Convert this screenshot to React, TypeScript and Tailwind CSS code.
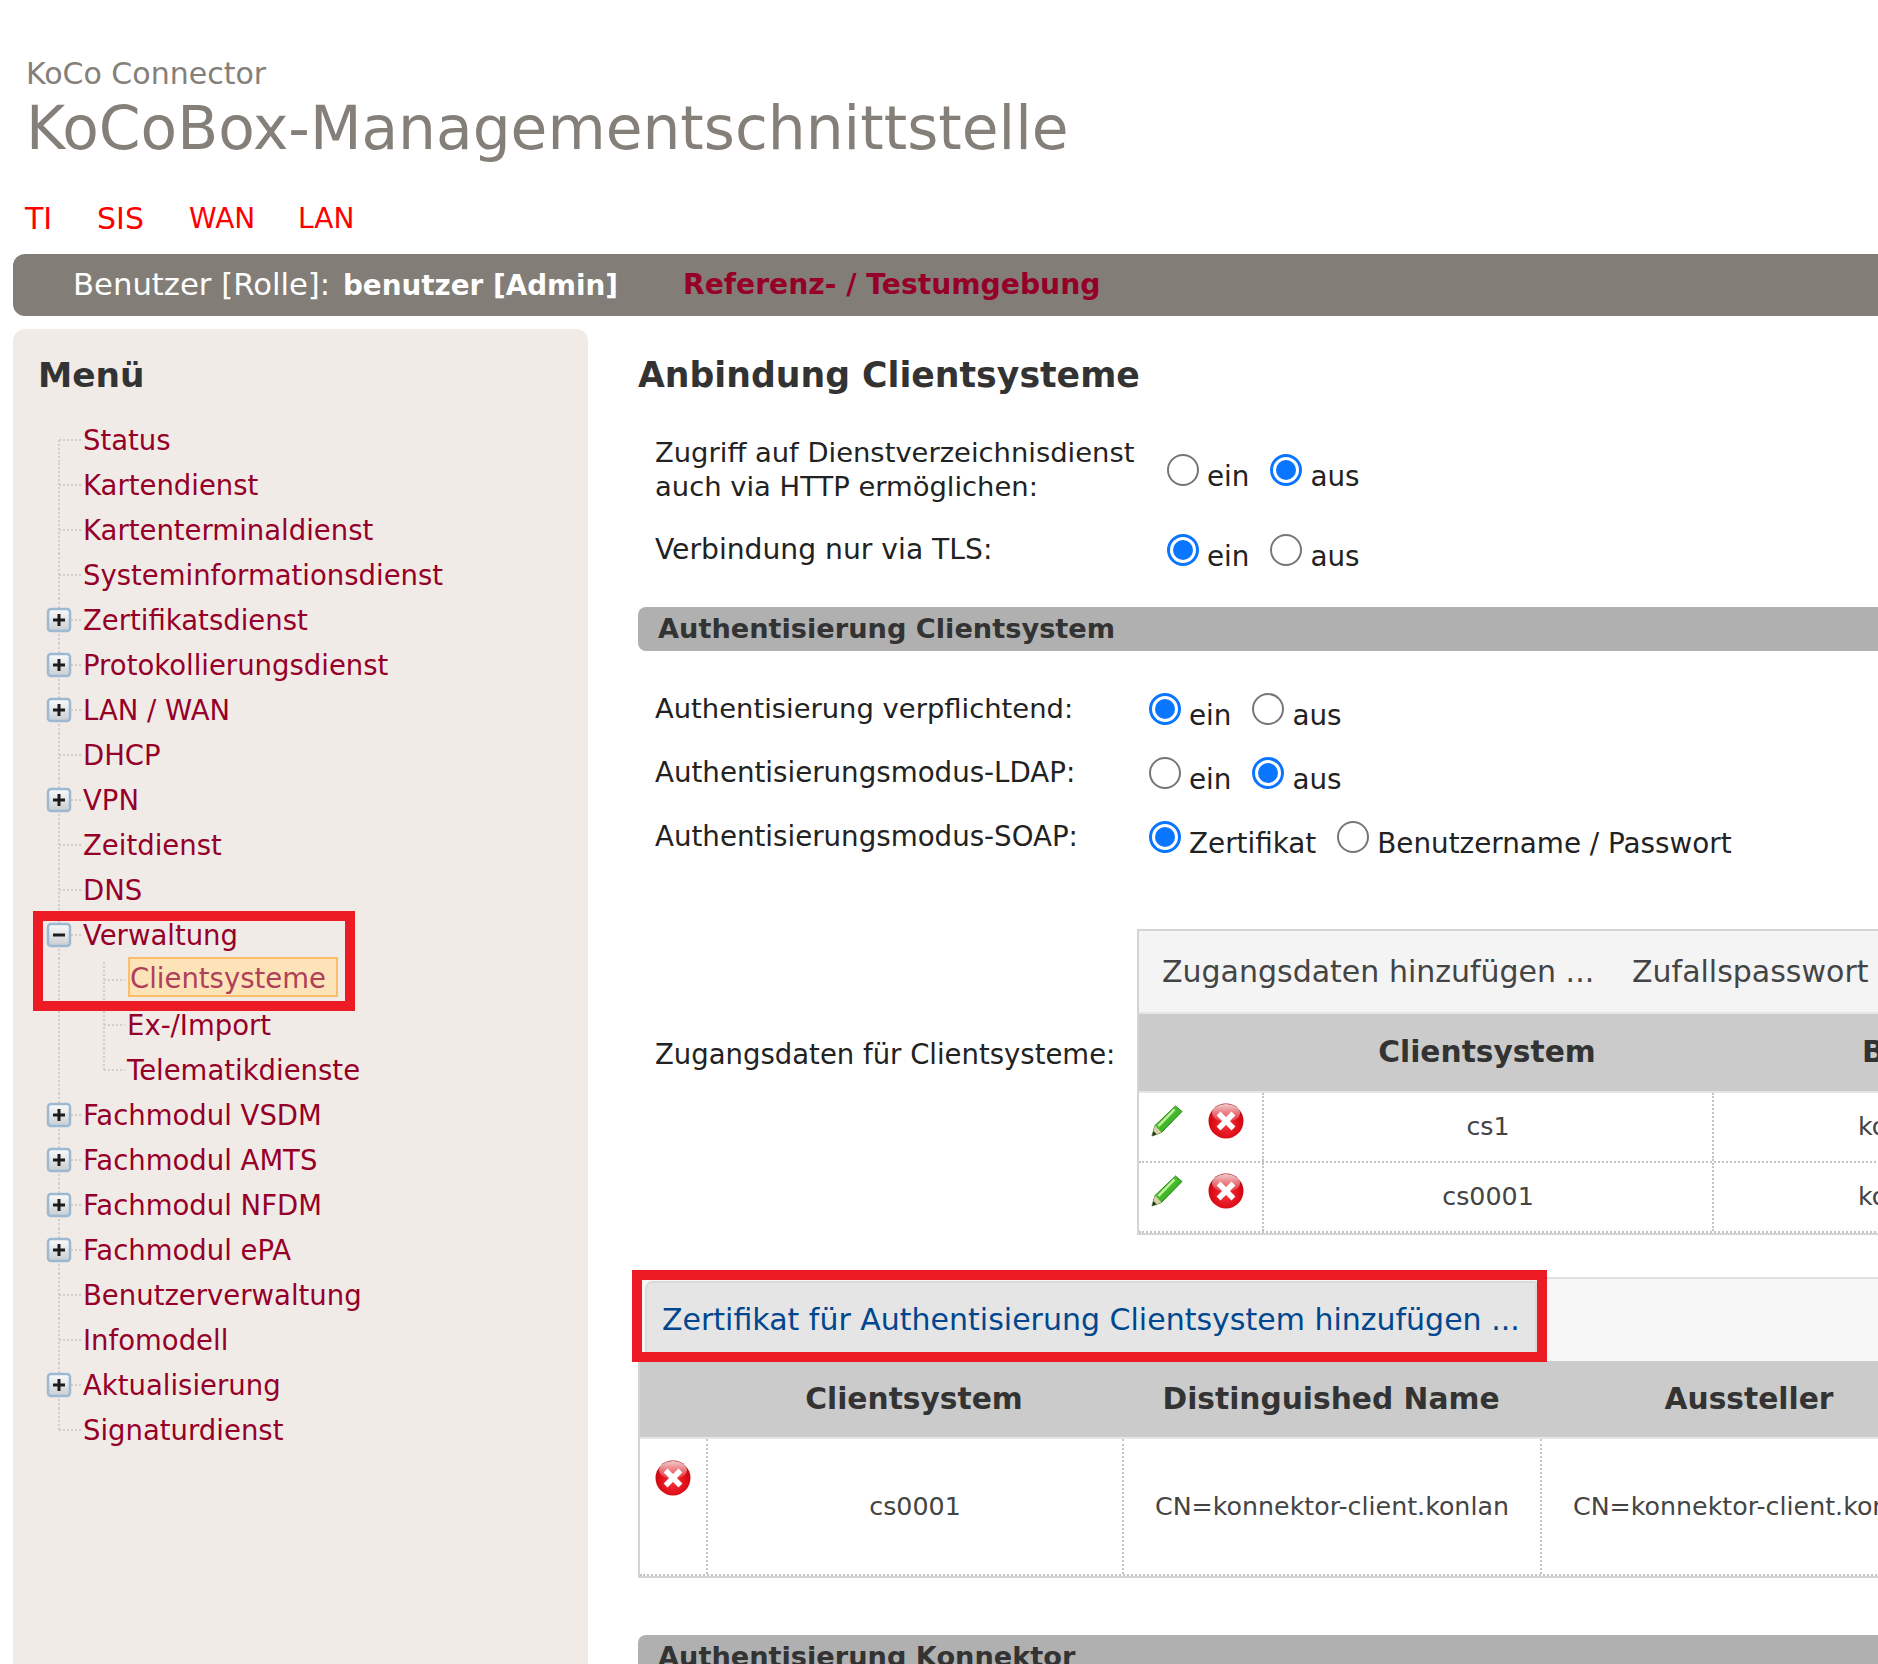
import type { ReactNode } from "react";

type TreeItem = {
  label: string;
  toggle?: "plus" | "minus";
  level?: 0 | 1;
  first?: boolean;
  last?: boolean;
  active?: boolean;
};

const menu: TreeItem[] = [
  { label: "Status", first: true },
  { label: "Kartendienst" },
  { label: "Kartenterminaldienst" },
  { label: "Systeminformationsdienst" },
  { label: "Zertifikatsdienst", toggle: "plus" },
  { label: "Protokollierungsdienst", toggle: "plus" },
  { label: "LAN / WAN", toggle: "plus" },
  { label: "DHCP" },
  { label: "VPN", toggle: "plus" },
  { label: "Zeitdienst" },
  { label: "DNS" },
  { label: "Verwaltung", toggle: "minus" },
  { label: "Clientsysteme", level: 1, first: true, active: true },
  { label: "Ex-/Import", level: 1 },
  { label: "Telematikdienste", level: 1, last: true },
  { label: "Fachmodul VSDM", toggle: "plus" },
  { label: "Fachmodul AMTS", toggle: "plus" },
  { label: "Fachmodul NFDM", toggle: "plus" },
  { label: "Fachmodul ePA", toggle: "plus" },
  { label: "Benutzerverwaltung" },
  { label: "Infomodell" },
  { label: "Aktualisierung", toggle: "plus" },
  { label: "Signaturdienst", last: true },
];

function TreeGuide({ item }: { item: TreeItem }) {
  const level = item.level ?? 0;
  const dots = { stroke: "#cfcfcf", strokeWidth: 2, strokeDasharray: "2 2" };
  return (
    <svg width={level === 1 ? 81 : 37} height={45} className="shrink-0">
      <defs>
        <linearGradient id="toggleFill" x1="0" y1="0" x2="0" y2="1">
          <stop offset="0%" stopColor="#fbfbfb" />
          <stop offset="100%" stopColor="#c9ced2" />
        </linearGradient>
      </defs>
      {level === 0 ? (
        <>
          <line x1={13} y1={item.first ? 22 : 0} x2={13} y2={item.last ? 22 : 45} {...dots} />
          <line x1={13} y1={22} x2={35} y2={22} {...dots} />
        </>
      ) : (
        <>
          <line x1={13} y1={0} x2={13} y2={45} {...dots} />
          <line x1={58} y1={item.first ? 4 : 0} x2={58} y2={item.last ? 22 : 45} {...dots} />
          <line x1={58} y1={22} x2={79} y2={22} {...dots} />
        </>
      )}
      {item.toggle && (
        <>
          <rect x={2} y={11} width={22} height={22} rx={3} fill="url(#toggleFill)" stroke="#9db9d2" strokeWidth={2.5} />
          <rect x={7} y={20.5} width={12} height={3} fill="#1c1c1c" />
          {item.toggle === "plus" && <rect x={11.5} y={16} width={3} height={12} fill="#1c1c1c" />}
        </>
      )}
    </svg>
  );
}

function Sidebar() {
  return (
    <aside className="w-[575px] shrink-0 h-[1400px] bg-[#f0ebe7] rounded-t-xl pl-[26px] pt-[23px]">
      <h2 className="-ml-[1px] text-[34.4px] leading-[46px] font-bold text-[#333] mb-[20px]">Menü</h2>
      <ul className="relative pl-[7px] text-[27.5px]">
        {menu.map((item) => (
          <li key={item.label} className="flex items-center h-[45px] text-[#960028]">
            <TreeGuide item={item} />
            {item.active ? (
              <span className="ml-[1px] -mt-[8px] h-[40px] w-[210px] leading-[38px] bg-[#fde4b8] border-2 border-[#fcbd6a] text-[#b0405a]">
                {item.label}
              </span>
            ) : (
              <span>{item.label}</span>
            )}
          </li>
        ))}
        <div className="absolute left-[-6px] top-[493px] w-[322px] h-[100px] border-[10px] border-[#ed1c24]" />
      </ul>
    </aside>
  );
}

function Radio({ checked, label }: { checked?: boolean; label: string }) {
  return (
    <span className="inline-flex items-center mr-[21px]">
      {checked ? (
        <span className="w-[32px] h-[32px] rounded-full border-[3px] border-[#0a75ff] bg-white flex items-center justify-center">
          <span className="w-[20px] h-[20px] rounded-full bg-[#0a75ff]" />
        </span>
      ) : (
        <span className="w-[32px] h-[32px] rounded-full border-2 border-[#767676] bg-white" />
      )}
      <span className="ml-[8px] pt-[14px] text-[27.8px]">{label}</span>
    </span>
  );
}

function OptionRow({ label, labelClass, height, children }: { label: ReactNode; labelClass: string; height: string; children: ReactNode }) {
  return (
    <div className={`flex items-center pl-[17px] ${height}`}>
      <div className={`${labelClass} shrink-0 leading-[34px]`}>{label}</div>
      <div className="flex items-center">{children}</div>
    </div>
  );
}

function SectionBar({ children }: { children: ReactNode }) {
  return (
    <div className="h-[44px] bg-[#b0b0b0] rounded-l-lg pl-[20px] leading-[44px] text-[27.2px] font-bold text-[#333] whitespace-nowrap">
      {children}
    </div>
  );
}

function DeleteIcon() {
  return (
    <svg width={36} height={36} viewBox="0 0 36 36" className="shrink-0">
      <defs>
        <radialGradient id="redBall" cx="50%" cy="60%" r="60%">
          <stop offset="0%" stopColor="#f4343c" />
          <stop offset="70%" stopColor="#dc0a14" />
          <stop offset="100%" stopColor="#b00a10" />
        </radialGradient>
        <linearGradient id="redShine" x1="0" y1="0" x2="0" y2="1">
          <stop offset="0%" stopColor="#ffffff" stopOpacity={0.8} />
          <stop offset="100%" stopColor="#ffffff" stopOpacity={0.1} />
        </linearGradient>
      </defs>
      <circle cx={18} cy={18} r={17.5} fill="url(#redBall)" />
      <ellipse cx={18} cy={10} rx={14} ry={9} fill="url(#redShine)" />
      <path d="M12.5 12.5 L23.5 23.5 M23.5 12.5 L12.5 23.5" stroke="#fff" strokeWidth={5.5} strokeLinecap="square" />
    </svg>
  );
}

function EditIcon() {
  return (
    <svg width={32} height={32} viewBox="0 0 32 32" className="shrink-0">
      <defs>
        <linearGradient id="pencilBody" x1="0" y1="0" x2="1" y2="1">
          <stop offset="0%" stopColor="#8fe060" />
          <stop offset="55%" stopColor="#3fb52a" />
          <stop offset="100%" stopColor="#1f8a18" />
        </linearGradient>
      </defs>
      <path d="M24.5 1 L31 6.5 L10.5 27.5 L1 31 L4 20.5 Z" fill="url(#pencilBody)" stroke="#2a8a1c" strokeWidth={1} strokeLinejoin="round" />
      <path d="M23.5 4.5 L7.5 21" stroke="#c2f29e" strokeWidth={2.5} />
      <path d="M1 31 L4 20.5 L10.5 27.5 Z" fill="#d9cfa6" />
      <path d="M1 31 L2.5 26 L5.6 29.2 Z" fill="#2c2c2c" />
    </svg>
  );
}

const dottedCell = "border-l-2 border-dotted border-[#c4c4c4] flex items-center justify-center whitespace-nowrap";

function CredentialsTable() {
  return (
    <div className="w-[1290px] shrink-0 border-2 border-r-0 border-[#d4d4d4] text-[#444] text-[25.3px]">
      <div className="h-[81px] bg-[#f4f4f4] flex items-center pl-[23px] text-[30px]">
        <span className="w-[470px]">Zugangsdaten hinzufügen ...</span>
        <span>Zufallspasswort</span>
      </div>
      <div className="grid grid-cols-[123px_450px_526px] h-[81px] bg-[#cbcbcb] border-y-2 border-[#e6e6e6] font-bold text-[#333] text-[29.7px]">
        <div />
        <div className="flex items-center justify-center">Clientsystem</div>
        <div className="flex items-center pl-[150px] whitespace-nowrap">Benutzername</div>
      </div>
      {["cs1", "cs0001"].map((name) => (
        <div key={name} className="grid grid-cols-[123px_450px_526px] h-[70px] first-of-type:h-[71px] border-b-2 border-dotted border-[#c4c4c4]">
          <div className="flex items-start pt-[12px] pl-[12px] gap-[25px]">
            <EditIcon />
            <div className="-mt-[2px]">
              <DeleteIcon />
            </div>
          </div>
          <div className={dottedCell}>{name}</div>
          <div className="border-l-2 border-dotted border-[#c4c4c4] flex items-center pl-[144px] whitespace-nowrap">konnektor</div>
        </div>
      ))}
    </div>
  );
}

function CertificateTable() {
  return (
    <div className="relative w-[1400px] border-x-2 border-b-2 border-[#d4d4d4] text-[#444] text-[25.3px]">
      <div className="h-[84px] bg-[#f6f6f6] border-t-2 border-[#e0e0e0] pt-[2px] flex items-stretch">
        <div className="ml-[5px] w-[892px] rounded-tl-lg bg-[#e5e5e5] border-2 border-[#dadada] pl-[15px] pb-[3px] flex items-center text-[30px] text-[#00478f] whitespace-nowrap">
          Zertifikat für Authentisierung Clientsystem hinzufügen ...
        </div>
      </div>
      <div className="grid grid-cols-[66px_416px_418px_418px] h-[78px] bg-[#cbcbcb] border-b-[2px] border-[#e6e6e6] font-bold text-[#333] text-[29.7px]">
        <div />
        <div className="flex items-center justify-center">Clientsystem</div>
        <div className="flex items-center justify-center">Distinguished Name</div>
        <div className="flex items-center justify-center">Aussteller</div>
      </div>
      <div className="grid grid-cols-[66px_416px_418px_418px] h-[137px] border-b-2 border-dotted border-[#c4c4c4]">
        <div className="pt-[21px] pl-[15px]">
          <DeleteIcon />
        </div>
        <div className={dottedCell}>cs0001</div>
        <div className={dottedCell}>CN=konnektor-client.konlan</div>
        <div className={dottedCell}>CN=konnektor-client.konlan</div>
      </div>
      <div className="absolute -left-[8px] -top-[7px] w-[915px] h-[92px] border-[10px] border-[#ed1c24]" />
    </div>
  );
}

export default function App() {
  return (
    <div className="w-[1878px] h-[1664px] overflow-hidden bg-white font-['DejaVu_Sans',sans-serif] text-[28px] text-[#222]">
      <header className="pl-[26px] pt-[55px] text-[#847f79]">
        <p className="text-[30px] leading-[38px]">KoCo Connector</p>
        <h1 className="text-[59.8px] leading-[72px] -mt-[1px]">KoCoBox-Managementschnittstelle</h1>
      </header>
      <nav className="flex pl-[25px] mt-[37px] h-[36px] leading-[36px] text-[#ff0000]">
        <a className="w-[72px] text-[30px]">TI</a>
        <a className="w-[92px] text-[30px]">SIS</a>
        <a className="w-[109px]">WAN</a>
        <a>LAN</a>
      </nav>
      <div className="ml-[13px] mt-[17px] h-[62px] bg-[#827d77] rounded-l-xl flex items-center pl-[60px] text-white whitespace-nowrap">
        <span className="w-[610px] text-[30.7px]">
          Benutzer [Rolle]: <b className="ml-[3px] text-[27.8px]">benutzer [Admin]</b>
        </span>
        <b className="text-[#960028] text-[28.2px]">Referenz- / Testumgebung</b>
      </div>
      <div className="flex pl-[13px] mt-[13px]">
        <Sidebar />
        <main className="ml-[50px] flex-1 min-w-0">
          <h2 className="text-[34.7px] leading-[46px] font-bold text-[#333] mt-[23px] mb-[28px]">Anbindung Clientsysteme</h2>
          <OptionRow
            labelClass="w-[512px] text-[27.4px]"
            height="h-[87px]"
            label={
              <>
                Zugriff auf Dienstverzeichnisdienst
                <br />
                auch via HTTP ermöglichen:
              </>
            }
          >
            <Radio label="ein" />
            <Radio checked label="aus" />
          </OptionRow>
          <OptionRow labelClass="w-[512px] text-[28.2px]" height="h-[73px]" label="Verbindung nur via TLS:">
            <Radio checked label="ein" />
            <Radio label="aus" />
          </OptionRow>
          <div className="mt-[21px]">
            <SectionBar>Authentisierung Clientsystem</SectionBar>
          </div>
          <div className="mt-[26px]">
            <OptionRow labelClass="w-[494px] text-[27.4px]" height="h-[64px]" label="Authentisierung verpflichtend:">
              <Radio checked label="ein" />
              <Radio label="aus" />
            </OptionRow>
            <OptionRow labelClass="w-[494px] text-[27.7px]" height="h-[64px]" label="Authentisierungsmodus-LDAP:">
              <Radio label="ein" />
              <Radio checked label="aus" />
            </OptionRow>
            <OptionRow labelClass="w-[494px] text-[27.7px]" height="h-[64px]" label="Authentisierungsmodus-SOAP:">
              <Radio checked label="Zertifikat" />
              <Radio label="Benutzername / Passwort" />
            </OptionRow>
          </div>
          <div className="flex items-center pl-[17px] mt-[60px]">
            <div className="w-[482px] shrink-0 text-[27.5px] mb-[54px]">Zugangsdaten für Clientsysteme:</div>
            <CredentialsTable />
          </div>
          <div className="mt-[42px]">
            <CertificateTable />
          </div>
          <div className="mt-[57px]">
            <SectionBar>Authentisierung Konnektor</SectionBar>
          </div>
        </main>
      </div>
    </div>
  );
}
